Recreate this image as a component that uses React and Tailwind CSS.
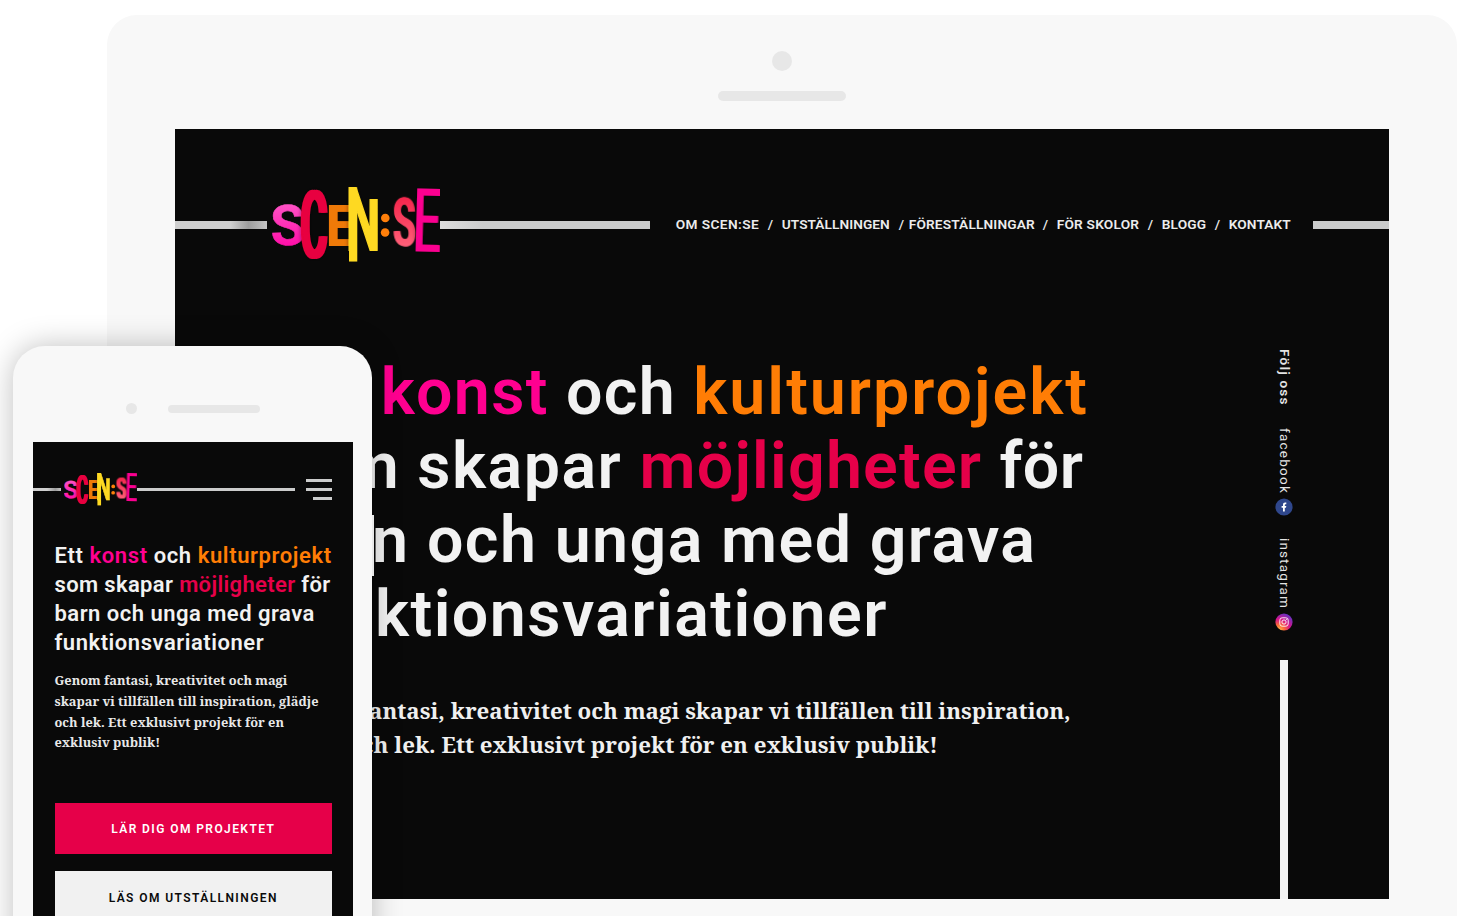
function Letter({ x, y, sx, sy, fill, children, rotate = 0, stroke = 0, weight = 700, filter }) {
  return (
    <text
      transform={`translate(${x} ${y}) rotate(${rotate}) scale(${sx} ${sy})`}
      fill={fill}
      stroke={fill}
      strokeWidth={stroke}
      fontWeight={weight}
      filter={filter}
      className="font-['Roboto',sans-serif] text-[100px]"
    >
      {children}
    </text>
  );
}

/* Thickens the vertical stems of a squeezed letter without touching its bars. */
function Widen({ id, by }) {
  return (
    <filter id={id} x="-30%" y="-10%" width="160%" height="120%" colorInterpolationFilters="sRGB">
      <feOffset in="SourceGraphic" dx={-by} result="a" />
      <feOffset in="SourceGraphic" dx={by} result="b" />
      <feMerge>
        <feMergeNode in="a" />
        <feMergeNode in="b" />
        <feMergeNode in="SourceGraphic" />
      </feMerge>
    </filter>
  );
}

function Logo({ id, className }) {
  return (
    <svg viewBox="0 0 168 76" className={className} role="img" aria-label="Scen:se">
      <defs>
        <linearGradient id={`${id}-pink`} x1="0" y1="0" x2="0" y2="1">
          <stop offset="0.2" stopColor="#ff4fc4" />
          <stop offset="0.8" stopColor="#ff0fa8" />
        </linearGradient>
        <linearGradient id={`${id}-coral`} x1="0" y1="0" x2="0" y2="1">
          <stop offset="0.2" stopColor="#f5284e" />
          <stop offset="0.8" stopColor="#ff6078" />
        </linearGradient>
        <clipPath id={`${id}-n`}>
          <path d="M76 0H89L96 12H108V64H76Z" />
        </clipPath>
        <filter id={`${id}-shade`} x="-20%" y="-20%" width="140%" height="140%">
          <feDropShadow dx="0" dy="0" stdDeviation="2" floodColor="#000" floodOpacity="0.45" />
        </filter>
        <Widen id={`${id}-w2`} by="2" />
        <Widen id={`${id}-w4`} by="4" />
      </defs>
      <Letter x={-1} y={58.5} sx={0.56} sy={0.56} rotate={-2} fill={`url(#${id}-pink)`} stroke={1}>S</Letter>
      <g filter={`url(#${id}-shade)`}>
        <Letter x={28.8} y={70.6} sx={0.405} sy={0.94} weight={500} fill="#e8003f" filter={`url(#${id}-w4)`}>C</Letter>
      </g>
      <Letter x={55} y={59} sx={0.46} sy={0.575} fill="#ef7a08" filter={`url(#${id}-w2)`}>E</Letter>
      <g filter={`url(#${id}-shade)`}>
        <g clipPath={`url(#${id}-n)`}>
          <Letter x={73.9} y={62.5} sx={0.485} sy={0.88} fill="#fed923" stroke={2}>N</Letter>
        </g>
        <rect x="77" y="0.5" width="8.2" height="74" fill="#fed923" />
      </g>
      <circle cx="113.3" cy="31" r="4.3" fill="#ff7f0a" />
      <circle cx="113.1" cy="45.5" r="4.3" fill="#ff7f0a" />
      <Letter x={121.5} y={59} sx={0.37} sy={0.67} weight={600} rotate={-1} fill={`url(#${id}-coral)`} filter={`url(#${id}-w4)`}>S</Letter>
      <g filter={`url(#${id}-shade)`}>
        <Letter x={140.6} y={64.3} sx={0.49} sy={0.885} weight={400} rotate={1.5} fill="#fb0090" filter={`url(#${id}-w2)`}>E</Letter>
      </g>
    </svg>
  );
}

const NAV = [
  { label: "OM SCEN:SE", cls: "w-[92px] tracking-[0.4px]" },
  { label: "UTSTÄLLNINGEN", cls: "w-[117px] tracking-[0.05px]" },
  { label: "FÖRESTÄLLNINGAR", cls: "w-[134px] tracking-[0.15px]", tight: true },
  { label: "FÖR SKOLOR", cls: "w-[91px] tracking-[0.2px]" },
  { label: "BLOGG", cls: "w-[53px] tracking-[0.15px]" },
  { label: "KONTAKT", cls: "w-[62px] tracking-[0.1px]" },
];

function Nav() {
  return (
    <nav className="ml-[26px] flex w-[637px] items-center pb-[2px] whitespace-nowrap font-['Roboto',sans-serif] text-[13.7px] leading-4 font-semibold text-[#ececec]">
      {NAV.map((item, i) => (
        <div key={item.label} className="flex">
          {i > 0 && <span className={item.tight ? "w-[10px] font-medium" : "w-[14px] font-medium"}>/</span>}
          <a className={item.cls}>{item.label}</a>
        </div>
      ))}
    </nav>
  );
}

function TabletHeadline() {
  return (
    <h1 className="pl-[103px] whitespace-nowrap font-['Roboto',sans-serif] text-[64.5px] leading-[74.3px] font-semibold text-[#f2f2f2]">
      <div className="ml-[2px] tracking-[1.3px]">Ett <span className="text-[#ff0090]">konst</span> och <span className="tracking-[2px] text-[#ff7d05]">kulturprojekt</span></div>
      <div className="-ml-[7px] tracking-[1.2px]">som <span className="tracking-[1.5px]">skapar</span> <span className="text-[#e60049]">möjligheter</span> <span className="tracking-[0.4px]">för</span></div>
      <div className="-ml-[4px] tracking-[1.4px]">barn och unga med grava</div>
      <div className="-ml-[2px] tracking-[1.45px]">funktionsvariationer</div>
    </h1>
  );
}

function SocialRail() {
  return (
    <aside className="flex w-[20px] flex-col items-center font-['Roboto',sans-serif] text-[13.5px] leading-5 text-[#e4e4e4]">
      <span className="h-[79px] pl-[3px] [writing-mode:vertical-rl] tracking-[1.25px] font-semibold">Följ oss</span>
      <span className="h-[70px] pl-[3px] [writing-mode:vertical-rl] tracking-[1.25px]">facebook</span>
      <svg viewBox="0 0 18 18" className="size-[18px]">
        <circle cx="9" cy="9" r="8.6" fill="#2f478c" />
        <path d="M8 13.5V9.7H6.6V7.9H8V6.8C8 5.3 8.8 4.5 10.2 4.5H11.3V6.2H10.5C10 6.2 9.8 6.5 9.8 7V7.9H11.3L11 9.7H9.8V13.5Z" fill="#fff" />
      </svg>
      <span className="mt-[22px] h-[75px] pl-[3px] [writing-mode:vertical-rl] tracking-[1.15px]">instagram</span>
      <svg viewBox="0 0 18 18" className="size-[18px]">
        <defs>
          <radialGradient id="insta" cx="0.2" cy="1" r="1.1">
            <stop offset="0" stopColor="#ffc850" />
            <stop offset="0.3" stopColor="#fb6a38" />
            <stop offset="0.6" stopColor="#d8148a" />
            <stop offset="1" stopColor="#5a35c8" />
          </radialGradient>
        </defs>
        <circle cx="9" cy="9" r="8.6" fill="url(#insta)" />
        <rect x="4.8" y="4.8" width="8.4" height="8.4" rx="2.4" fill="none" stroke="#fff" strokeWidth="0.9" />
        <circle cx="9" cy="9" r="2.1" fill="none" stroke="#fff" strokeWidth="0.9" />
        <circle cx="11.4" cy="6.6" r="0.5" fill="#fff" />
      </svg>
      <div className="mt-[29px] h-[239px] w-2 bg-[#f2f2f2]" />
    </aside>
  );
}

function Tablet() {
  return (
    <section className="ml-[107px] flex h-[960px] w-[1350px] shrink-0 flex-col items-center rounded-[30px] bg-[#f8f8f8]">
      <div className="mt-9 size-5 rounded-full bg-[#e7e7e7]" />
      <div className="mt-5 h-[10px] w-32 rounded-full bg-[#e7e7e7]" />
      <div className="mt-[27.5px] flex h-[770.5px] w-[1214.5px] shrink-0 flex-col overflow-hidden bg-[#090909]">
        <header className="flex h-[226px] shrink-0 items-start">
          <div className="flex h-[192px] w-full items-center">
            <div className="h-2 w-[92px] bg-linear-to-r from-[#cfcfcf] from-60% via-[#9d9d9d] via-80% to-[#c4c4c4]" />
            <Logo id="tablet" className="ml-[5px] h-[76px] w-[168px] shrink-0" />
            <div className="h-2 w-[210px] shrink-0 bg-linear-to-r from-[#dedede] to-[#cbcccc] to-20%" />
            <Nav />
            <div className="h-2 flex-1 bg-[#cbcccc]" />
          </div>
        </header>
        <div className="flex">
          <div className="w-[1099px] shrink-0">
            <TabletHeadline />
            <p className="mt-[42.6px] pl-[99px] whitespace-nowrap font-['Noto_Serif','DejaVu_Serif',serif] text-[22.3px] leading-[33.5px] font-bold text-[#f0f0f0]">
              Genom fantasi, kreativitet och magi skapar vi tillfällen till inspiration,
              <br />
              glädje och lek. Ett exklusivt projekt för en exklusiv publik!
            </p>
          </div>
          <div className="-mt-[6px]">
            <SocialRail />
          </div>
        </div>
      </div>
    </section>
  );
}

function Phone() {
  return (
    <section className="absolute top-[346px] left-[13px] flex h-[640px] w-[359px] flex-col rounded-t-[32px] bg-[#f8f8f8] pl-5 shadow-[0_0_30px_rgba(0,0,0,0.25)]">
      {/* side button */}
      <div className="absolute top-[169px] left-full h-[61px] w-[2px] bg-[#e9e9e9]" />
      <div className="flex h-[95.5px] shrink-0 items-start pt-[57px]">
        <div className="ml-[93px] size-[11px] rounded-full bg-[#e7e7e7]" />
        <div className="mt-[2px] ml-[31px] h-2 w-[92px] rounded-full bg-[#e7e7e7]" />
      </div>
      <div className="flex w-[319.5px] flex-1 flex-col bg-[#090909]">
        <header className="flex h-[95px] shrink-0 items-center">
          <div className="h-[3px] w-[28px] bg-linear-to-r from-[#cfcfcf] from-50% via-[#9d9d9d] via-80% to-[#c4c4c4]" />
          <Logo id="phone" className="ml-[3px] h-[33px] w-[73px] shrink-0" />
          <div className="h-[3px] w-[158px] bg-[#cbcccc]" />
          <div className="ml-[11px] flex w-[26px] flex-col items-end gap-[6px]">
            <div className="h-[3px] w-[26px] bg-[#cbcccc]" />
            <div className="h-[3px] w-[26px] bg-[#cbcccc]" />
            <div className="h-[3px] w-[19px] bg-[#cbcccc]" />
          </div>
        </header>
        <div className="flex flex-col pr-[20.5px] pl-[21.5px]">
          <h2 className="mt-[4px] whitespace-nowrap font-['Roboto',sans-serif] text-[22px] leading-[29.2px] font-semibold text-[#f2f2f2]">
            <div className="tracking-[0.6px]">Ett <span className="text-[#ff0090]">konst</span> och <span className="text-[#ff7d05]">kulturprojekt</span></div>
            <div className="tracking-[0.36px]">som skapar <span className="text-[#e60049]">möjligheter</span> för</div>
            <div className="tracking-[0.49px]">barn och unga med grava</div>
            <div className="tracking-[0.54px]">funktionsvariationer</div>
          </h2>
          <p className="mt-[13px] whitespace-nowrap font-['Noto_Serif','DejaVu_Serif',serif] text-[12.8px] leading-[20.65px] font-bold text-[#e8e8e8]">
            Genom fantasi, kreativitet och magi
            <br />
            skapar vi tillfällen till inspiration, glädje
            <br />
            och lek. Ett exklusivt projekt för en
            <br />
            exklusiv publik!
          </p>
          <div className="mt-[50px] flex flex-col gap-[17px] text-center font-['Roboto',sans-serif] text-[12px] leading-[53px] font-semibold tracking-[1.42px]">
            <a className="h-[51.5px] bg-[#e60049] text-white">LÄR DIG OM PROJEKTET</a>
            <a className="h-[51.5px] bg-[#f1f1f1] pt-px text-[#0a0a0a]">LÄS OM UTSTÄLLNINGEN</a>
          </div>
        </div>
      </div>
    </section>
  );
}

export default function App() {
  return (
    <main className="relative h-[916px] w-[1478px] overflow-hidden bg-white pt-[15px]">
      <Tablet />
      <Phone />
    </main>
  );
}
